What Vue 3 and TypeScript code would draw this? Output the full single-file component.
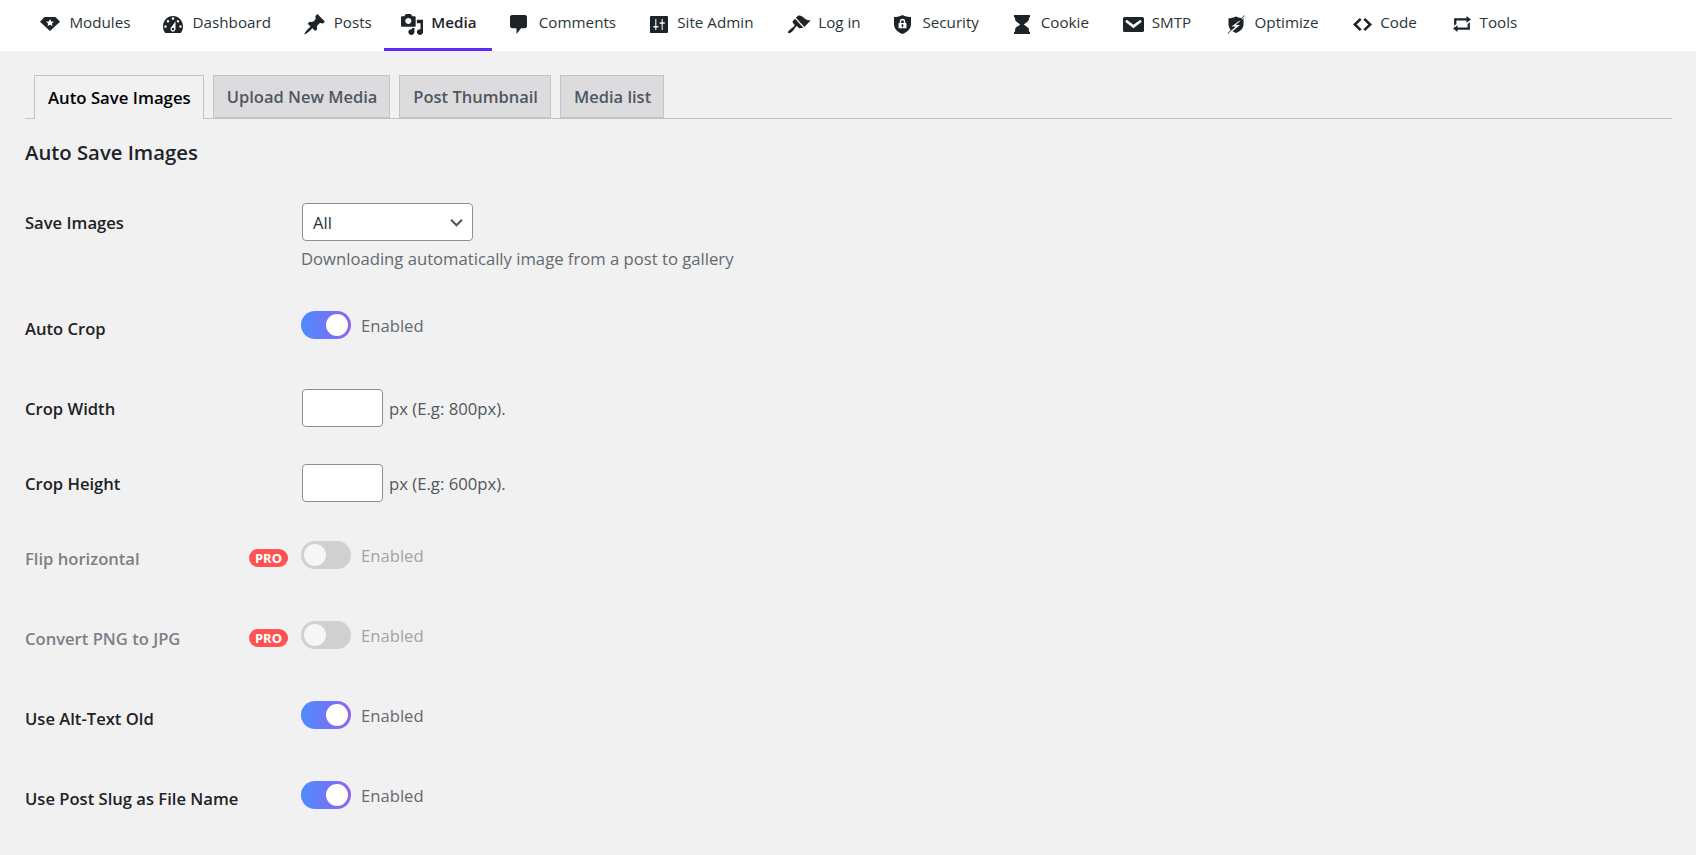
<script setup lang="ts">
interface NavItem { label: string; d: string; w?: string; active?: boolean; vb: string; iw: number; ih: number; gap: number; ml: number }
const nav: NavItem[] = [
  { label: 'Modules', ml: 0, vb: '0 3 20 15', iw: 20, ih: 14, gap: 9.4, d: 'M4.5 3h11L20 8.200 10 18 0 8.200z', w: 'M10 5.200l1.200 2.600 2.800.3-2.100 1.900.6 2.800L10 11.400l-2.500 1.400.6-2.800L6 8.100l2.800-.3z' },
  { label: 'Dashboard', ml: 2.7, vb: '2 3 16 13', iw: 20, ih: 17, gap: 9.5, d: 'M3.76 16h12.48c1.1-1.37 1.76-3.11 1.76-5 0-4.42-3.58-8-8-8s-8 3.58-8 8c0 1.89.66 3.63 1.76 5zM10 4c.55 0 1 .45 1 1s-.45 1-1 1-1-.45-1-1 .45-1 1-1zM6 6c.55 0 1 .45 1 1s-.45 1-1 1-1-.45-1-1 .45-1 1-1zm8 0c.55 0 1 .45 1 1s-.45 1-1 1-1-.45-1-1 .45-1 1-1zm-5.37 5.55L12 7v6c0 1.1-.9 2-2 2s-2-.9-2-2c0-.57.24-1.08.63-1.45zM4 10c.55 0 1 .45 1 1s-.45 1-1 1-1-.45-1-1 .45-1 1-1zm12 0c.55 0 1 .45 1 1s-.45 1-1 1-1-.45-1-1 .45-1 1-1zm-5 3c0-.55-.45-1-1-1s-1 .45-1 1 .45 1 1 1 1-.45 1-1z' },
  { label: 'Posts', ml: 2.7, vb: '1 1.200 17.700 17.800', iw: 21, ih: 21, gap: 9, d: 'M10.44 3.02l1.82-1.82 6.36 6.35-1.83 1.82c-1.05-.68-2.48-.57-3.41.36l-.75.75c-.92.93-1.04 2.35-.35 3.41l-1.83 1.82-2.41-2.41-2.8 2.79c-.42.42-3.38 2.71-3.8 2.29s1.86-3.39 2.28-3.81l2.79-2.79L4.1 9.36l1.83-1.82c1.05.69 2.48.57 3.4-.36l.75-.75c.93-.92 1.05-2.35.36-3.41z' },
  { label: 'Media', ml: -2.5, active: true, vb: '1 1 18 18', iw: 22, ih: 21, gap: 8, d: 'M13 11V4c0-.55-.45-1-1-1h-1.67L9 1H5L3.67 3H2c-.55 0-1 .45-1 1v7c0 .55.45 1 1 1h10c.55 0 1-.45 1-1zM7 4.5c1.38 0 2.5 1.12 2.5 2.5S8.38 9.5 7 9.5 4.5 8.38 4.5 7 5.62 4.5 7 4.5zM14 6h5v10.5c0 1.38-1.12 2.5-2.5 2.5S14 17.88 14 16.5s1.12-2.5 2.5-2.5c.17 0 .34.02.5.05V9h-3V6zm-4 8.05V13h2v3.5c0 1.38-1.12 2.5-2.5 2.5S7 17.88 7 16.5 8.12 14 9.5 14c.17 0 .34.02.5.05z' },
  { label: 'Comments', ml: 3.8, vb: '1.500 1 17 18', iw: 17, ih: 19, gap: 11.4, d: 'M3.500 1h13c1.100 0 2 .9 2 2v8.500c0 1.100-.9 2-2 2h-4L8 19v-5.500H3.500c-1.100 0-2-.9-2-2V3c0-1.100.9-2 2-2z' },
  { label: 'Site Admin', ml: 3.8, vb: '1.500 1 17 18', iw: 18, ih: 17, gap: 9.4, d: 'M18.500 18V2c0-.55-.45-1-1-1h-15c-.55 0-1 .45-1 1v16.500c0 .3.2.5.5.5h15.500c.55 0 1-.45 1-1zM7.500 11.500h1.200c.5 0 .9.4.9.9s-.4.9-.9.9H7.500v2.200c0 .3-.2.5-.5.5s-.5-.2-.5-.5v-2.200H5.300c-.5 0-.9-.4-.9-.9s.4-.9.9-.9h1.200V4.500c0-.3.2-.5.5-.5s.5.2.5.5zM13.500 7.500h1.200c.5 0 .9.4.9.9s-.4.9-.9.9h-1.200v6.200c0 .3-.2.5-.5.5s-.5-.2-.5-.5V9.300h-1.200c-.5 0-.9-.4-.9-.9s.4-.9.9-.9h1.200V4.500c0-.3.2-.5.5-.5s.5.2.5.5z' },
  { label: 'Log in', ml: 4.8, vb: '.8 1.800 19.200 14.600', iw: 23, ih: 19, gap: 7, d: 'M14.48 11.06L7.41 3.99l1.5-1.5c.5-.56 2.3-.47 3.51.32 1.21.8 1.43 1.28 2.91 2.1 1.18.64 2.45 1.26 4.45.85zm-.71.71L6.7 4.7 4.93 6.47c-.39.39-.39 1.02 0 1.41l1.06 1.06c.39.39.39 1.03 0 1.42-.6.6-1.43 1.11-2.21 1.69-.35.26-.7.53-1.01.84C1.43 13.23.4 14.96 1.1 15.66c.7.71 2.44-.32 3.82-1.7.3-.31.58-.66.84-1.01.58-.78 1.09-1.61 1.69-2.21.39-.39 1.03-.39 1.42 0l1.06 1.06c.39.39 1.02.39 1.41 0z' },
  { label: 'Security', ml: 3.8, vb: '2.500 1 15 18', iw: 17, ih: 19, gap: 11, d: 'M10 1c2.400 1.300 4.700 1.900 7.500 2v6.500c0 4.500-3 7.800-7.500 9.500-4.500-1.700-7.500-5-7.500-9.500V3c2.800-.1 5.100-.7 7.500-2z', w: 'M7.600 8.500V7a2.400 2.400 0 014.800 0v1.500h.6c.3 0 .5.2.5.500v4c0 .3-.2.5-.5.5H7c-.3 0-.5-.2-.5-.5V9c0-.3.2-.5.500-.5zm1.300 0h2.200V7a1.100 1.100 0 00-2.200 0zM10 9.800c-.5 0-.9.400-.9.900 0 .3.200.6.400.8v1h1v-1c.2-.2.4-.5.400-.8 0-.5-.4-.9-.9-.9z' },
  { label: 'Cookie', ml: 4.8, vb: '2.500 0 15 20', iw: 16, ih: 19, gap: 11, d: 'M2.500 0h15v2.500h-1v2c0 2.500-3.500 4-4.800 5.500 1.300 1.500 4.800 3 4.800 5.500v2h1V20h-15v-2.500h1v-2c0-2.500 3.500-4 4.800-5.500C7 8.500 3.500 7 3.500 4.500v-2h-1z' },
  { label: 'SMTP', ml: 3.8, vb: '0 3 20 14', iw: 21, ih: 15, gap: 8, d: 'M1.500 3h17c.8 0 1.500.7 1.500 1.500v11c0 .8-.7 1.500-1.500 1.500h-17C.7 17 0 16.300 0 15.500v-11C0 3.700.7 3 1.500 3z', w: 'M3.600 5.600L10 10.300l6.400-4.700 1.500 1.800L10 13.600 2.100 7.400z' },
  { label: 'Optimize', ml: 5.8, vb: '1 0 18 20', iw: 18, ih: 19, gap: 9.5, d: 'M10 1.500c2.400 1.200 4.700 1.800 7.500 1.900v6.300c0 4.300-3 7.500-7.500 9.200-4.500-1.700-7.500-4.900-7.500-9.200V3.400c2.800-.1 5.100-.7 7.500-1.900zM18.200.3l.5.4L2 19.700l-.5-.4z', w: 'M13 6.200L5.500 12l4.200.2-5 5 1 .7 8.300-7.400-4.400-.2 4.600-3.700zM16.600 3.200l.7.6-.9 1-.7-.6z' },
  { label: 'Code', ml: 4.8, vb: '2.300 4.500 15.400 11', iw: 19, ih: 13, gap: 8, d: 'M7.800 4.500l1.500 1.500-4 4 4 4-1.500 1.500L2.300 10zM12.200 4.500l5.500 5.500-5.500 5.500-1.500-1.500 4-4-4-4z' },
  { label: 'Tools', ml: 5.8, vb: '2 3 16 14', iw: 18, ih: 16, gap: 9, d: 'M5 7v3l-2 1.500V5h11V3l4 3.010L14 9V7H5zm10 6v-3l2-1.500V15H6v2l-4-3.010L6 11v2h9z' },
]

const tabs = ['Auto Save Images', 'Upload New Media', 'Post Thumbnail', 'Media list']

type Kind = 'select' | 'toggle' | 'input'
interface Row { label: string; kind: Kind; on?: boolean; pro?: boolean; hint?: string }
const rows: Row[] = [
  { label: 'Save Images', kind: 'select' },
  { label: 'Auto Crop', kind: 'toggle', on: true },
  { label: 'Crop Width', kind: 'input', hint: 'px (E.g: 800px).' },
  { label: 'Crop Height', kind: 'input', hint: 'px (E.g: 600px).' },
  { label: 'Flip horizontal', kind: 'toggle', pro: true },
  { label: 'Convert PNG to JPG', kind: 'toggle', pro: true },
  { label: 'Use Alt-Text Old', kind: 'toggle', on: true },
  { label: 'Use Post Slug as File Name', kind: 'toggle', on: true },
]
</script>

<template>
  <div class="page">
    <nav class="topbar">
      <a
        v-for="item in nav"
        :key="item.label"
        class="nav-item"
        :class="{ active: item.active }"
        :style="{ gap: item.gap + 'px', marginLeft: item.ml + 'px' }"
      >
        <svg :width="item.iw" :height="item.ih" :viewBox="item.vb" preserveAspectRatio="none" class="nav-icon" aria-hidden="true">
          <path :d="item.d" fill="#1d2327" />
          <path v-if="item.w" :d="item.w" fill="#fff" fill-rule="evenodd" />
        </svg>
        <span class="nav-text">{{ item.label }}</span>
      </a>
    </nav>

    <main class="content">
      <div class="tabs">
        <a v-for="(tab, i) in tabs" :key="tab" class="tab" :class="{ current: i === 0 }">{{ tab }}</a>
      </div>

      <h2 class="title">Auto Save Images</h2>

      <div
        v-for="row in rows"
        :key="row.label"
        class="row"
        :class="['row-' + row.kind, { locked: row.pro }]"
      >
        <div class="label">
          <span>{{ row.label }}</span>
          <span v-if="row.pro" class="pro">PRO</span>
        </div>

        <div class="control">
          <template v-if="row.kind === 'select'">
            <div class="select-wrap">
              <select class="select"><option>All</option></select>
              <svg class="chevron" viewBox="0 0 12 8" aria-hidden="true">
                <path d="M1 1.500l5 5 5-5" fill="none" stroke="#50575e" stroke-width="2" />
              </svg>
            </div>
            <p class="desc">Downloading automatically image from a post to gallery</p>
          </template>

          <div v-else-if="row.kind === 'toggle'" class="toggle-line">
            <span class="toggle" :class="{ on: row.on }"><i class="knob"></i></span>
            <span class="toggle-text">Enabled</span>
          </div>

          <div v-else class="input-line">
            <input class="input" type="text" />
            <span class="hint">{{ row.hint }}</span>
          </div>
        </div>
      </div>
    </main>
  </div>
</template>

<style>
html, body { margin: 0; background: #f1f1f1; }
</style>

<style scoped>
.page {
  min-height: 855px;
  background: #f1f1f1;
  font-family: "Open Sans", "Noto Sans", sans-serif;
  color: #1d2327;
  overflow: hidden;
}
.topbar {
  display: flex;
  height: 51px;
  padding-left: 25px;
  background: #fff;
  box-sizing: border-box;
}
.nav-item {
  display: flex;
  align-items: center;
  padding: 0 15px;
  border-bottom: 3px solid transparent;
  font-size: 15.200px;
  color: #2c3338;
  white-space: nowrap;
}
.nav-text { margin-bottom: 5px; }
.nav-item.active {
  padding-left: 17px;
  border-bottom-color: #5b2bf5;
  font-weight: 600;
  color: #1d2327;
}
.nav-icon {
  flex: none;
}
.content {
  padding: 24px 24px 0 25px;
}
.tabs {
  display: flex;
  gap: 9px;
  height: 44px;
  padding-left: 9px;
  border-bottom: 1px solid #c3c4c7;
  box-sizing: border-box;
}
.tab {
  display: flex;
  align-items: center;
  height: 43px;
  padding: 0 12px 0 13px;
  box-sizing: border-box;
  border: 1px solid #c3c4c7;
  background: #dcdcde;
  font-size: 16.500px;
  font-weight: 600;
  color: #50575e;
  white-space: nowrap;
}
.tab.current {
  height: 44px;
  background: #f1f1f1;
  border-bottom: 0;
  font-size: 16.750px;
  color: #000;
}
.title {
  margin: 20px 0 23px;
  font-size: 20.300px;
  line-height: 26px;
  font-weight: 600;
  color: #1d2327;
}
.row {
  display: grid;
  grid-template-columns: 277px 1fr;
  min-height: 80px;
}
.row-select { min-height: 106px; }
.row-input { min-height: 75px; }
.label {
  display: flex;
  align-items: center;
  justify-content: space-between;
  align-self: start;
  height: 28px;
  margin-top: 20px;
  padding-right: 14px;
  font-size: 16.600px;
  font-weight: 600;
  white-space: nowrap;
}
.locked .label { color: #7c8085; }
.pro {
  display: flex;
  align-items: center;
  justify-content: center;
  width: 39px;
  height: 18px;
  border-radius: 9px;
  background: #ff5252;
  color: #fff;
  font-size: 13px;
  font-weight: 700;
}
.control { padding-top: 15px; }
.select-wrap {
  position: relative;
  width: 171px;
  height: 38px;
}
.select {
  appearance: none;
  width: 100%;
  height: 100%;
  padding: 0 10px;
  border: 1px solid #8c8f94;
  border-radius: 4px;
  background: #fff;
  font: 400 16.600px "Open Sans", "Noto Sans", sans-serif;
  color: #2c3338;
}
.chevron {
  position: absolute;
  top: 15px;
  right: 10px;
  width: 13px;
  height: 9px;
}
.desc {
  margin: 5px 0 0 -1px;
  font-size: 16.660px;
  line-height: 26px;
  color: #646970;
}
.toggle-line {
  display: flex;
  align-items: center;
  gap: 10px;
  margin: 2px 0 0 -1px;
  height: 28px;
}
.toggle {
  position: relative;
  width: 50px;
  height: 28px;
  border-radius: 14px;
  background: #d0d0d0;
}
.toggle.on { background: linear-gradient(90deg, #4a8cff, #9163f2); }
.knob {
  position: absolute;
  top: 3px;
  left: 3px;
  width: 22px;
  height: 22px;
  border-radius: 50%;
  background: #f6f6f6;
}
.on .knob { left: 25px; background: #fff; }
.toggle-text {
  font-size: 16.650px;
  color: #646970;
}
.locked .toggle-text { color: #a2a4a7; }
.input-line {
  display: flex;
  align-items: center;
  gap: 6px;
}
.input {
  width: 81px;
  height: 38px;
  padding: 0;
  border: 1px solid #8c8f94;
  border-radius: 4px;
  background: #fff;
  box-sizing: border-box;
}
.hint {
  font-size: 16.700px;
  color: #50575e;
}
</style>
